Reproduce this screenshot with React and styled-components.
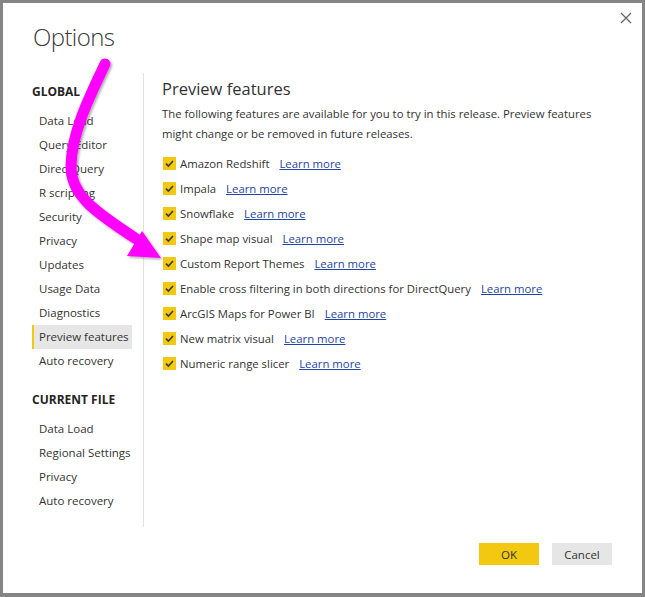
import styled, { createGlobalStyle } from "styled-components";

const GlobalStyle = createGlobalStyle`
  html, body { margin: 0; padding: 0; background: #fff; }
  body { font-family: "Open Sans", "Segoe UI", "Liberation Sans", sans-serif; color: #333; }
  * { box-sizing: border-box; }
`;

const globalItems = [
  "Data Load",
  "Query Editor",
  "DirectQuery",
  "R scripting",
  "Security",
  "Privacy",
  "Updates",
  "Usage Data",
  "Diagnostics",
  "Preview features",
  "Auto recovery",
];

const fileItems = ["Data Load", "Regional Settings", "Privacy", "Auto recovery"];

const features = [
  "Amazon Redshift",
  "Impala",
  "Snowflake",
  "Shape map visual",
  "Custom Report Themes",
  "Enable cross filtering in both directions for DirectQuery",
  "ArcGIS Maps for Power BI",
  "New matrix visual",
  "Numeric range slicer",
];

export default function App() {
  return (
    <>
      <GlobalStyle />
      <Frame>
        <Header>
          <Title>Options</Title>
          <CloseButton aria-label="Close">
            <svg width="12" height="12" viewBox="0 0 12 12">
              <path d="M1 1 L11 11 M11 1 L1 11" stroke="#666" strokeWidth="1.3" />
            </svg>
          </CloseButton>
        </Header>

        <Body>
          <Sidebar>
            <SectionTitle>GLOBAL</SectionTitle>
            {globalItems.map((item) => (
              <NavItem key={"g" + item} $active={item === "Preview features"}>
                {item}
              </NavItem>
            ))}
            <SectionTitle $spaced>CURRENT FILE</SectionTitle>
            {fileItems.map((item) => (
              <NavItem key={"f" + item}>{item}</NavItem>
            ))}
          </Sidebar>

          <Content>
            <Heading>Preview features</Heading>
            <Description>
              The following features are available for you to try in this release. Preview features
              might change or be removed in future releases.
            </Description>
            <FeatureList>
              {features.map((f) => (
                <FeatureRow key={f}>
                  <CheckBox>
                    <svg width="13" height="13" viewBox="0 0 13 13">
                      <path d="M3 6.6 L5.4 9 L10 4" fill="none" stroke="#3a3a3a" strokeWidth="1.6" />
                    </svg>
                  </CheckBox>
                  <FeatureLabel>{f}</FeatureLabel>
                  <LearnMore href="#">Learn more</LearnMore>
                </FeatureRow>
              ))}
            </FeatureList>
          </Content>
        </Body>

        <Footer>
          <Button $primary>OK</Button>
          <Button>Cancel</Button>
        </Footer>

        <ArrowOverlay width="645" height="597" viewBox="0 0 645 597">
          <defs>
            <filter id="shadow" x="-20%" y="-20%" width="140%" height="140%">
              <feDropShadow dx="1.5" dy="1.5" stdDeviation="1.2" floodColor="#000" floodOpacity="0.35" />
            </filter>
          </defs>
          <g filter="url(#shadow)">
            <path
              d="M105 64 C 92 92, 72 130, 71 165 C 70 195, 95 212, 138 240"
              fill="none"
              stroke="#ff00ff"
              strokeWidth="11"
              strokeLinecap="round"
            />
            <polygon points="142,231 161,258 127,256" fill="#ff00ff" />
          </g>
        </ArrowOverlay>
      </Frame>
    </>
  );
}

const Frame = styled.div`
  position: relative;
  width: 645px;
  height: 597px;
  border: 3px solid #858585;
  border-bottom-width: 4px;
  background: #fff;
  display: flex;
  flex-direction: column;
`;

const Header = styled.div`
  height: 70px;
  display: flex;
  justify-content: space-between;
  align-items: flex-start;
  padding: 19px 10px 0 30px;
  flex: none;
`;

const Title = styled.h1`
  margin: 0;
  font-family: "Open Sans", "Segoe UI", sans-serif;
  font-weight: 300;
  font-size: 24px;
  letter-spacing: -0.6px;
  line-height: 30px;
  color: #3b3a39;
`;

const CloseButton = styled.button`
  border: none;
  background: none;
  padding: 0;
  margin-top: -10px;
  width: 12px;
  height: 12px;
  display: flex;
`;

const Body = styled.div`
  display: flex;
  height: 454px;
  flex: none;
`;

const Sidebar = styled.nav`
  width: 141px;
  padding: 8px 0 0 29px;
  border-right: 1px solid #e1e1e1;
  display: flex;
  flex-direction: column;
  flex: none;
`;

const SectionTitle = styled.div`
  font-size: 12px;
  font-weight: 700;
  line-height: 22px;
  color: #252423;
  margin: ${(p) => (p.$spaced ? "16px 0 6px" : "0 0 6px")};
`;

const NavItem = styled.div`
  width: 100px;
  height: 24px;
  line-height: 24px;
  font-size: 11.5px;
  color: #333;
  padding-left: 5px;
  border-left: 2px solid ${(p) => (p.$active ? "#f2c811" : "transparent")};
  background: ${(p) => (p.$active ? "#e6e6e6" : "transparent")};
  white-space: nowrap;
`;

const Content = styled.section`
  flex: 1;
  padding: 4px 20px 0 18px;
`;

const Heading = styled.h2`
  margin: 0;
  font-size: 16.5px;
  font-weight: 400;
  line-height: 24px;
  color: #333;
`;

const Description = styled.p`
  margin: 3px 0 0;
  font-size: 11.35px;
  line-height: 20px;
  color: #333;
`;

const FeatureList = styled.div`
  margin-top: 7px;
  display: flex;
  flex-direction: column;
`;

const FeatureRow = styled.div`
  display: flex;
  align-items: center;
  height: 25px;
  padding-left: 1px;
`;

const CheckBox = styled.span`
  width: 13px;
  height: 13px;
  background: #f2c811;
  display: flex;
  flex: none;
  margin-right: 4px;
`;

const FeatureLabel = styled.span`
  font-size: 11.35px;
  color: #333;
  white-space: nowrap;
`;

const LearnMore = styled.a`
  margin-left: 10px;
  font-size: 11.35px;
  color: #1f44a3;
  text-decoration: underline;
  white-space: nowrap;
`;

const Footer = styled.div`
  display: flex;
  justify-content: flex-end;
  gap: 13px;
  padding: 16px 30px 0 0;
`;

const Button = styled.button`
  width: 60px;
  height: 22px;
  border: none;
  font-family: "Open Sans", "Segoe UI", sans-serif;
  font-size: 11.5px;
  color: #333;
  background: ${(p) => (p.$primary ? "#f2c811" : "#e6e6e6")};
  padding: 0;
`;

const ArrowOverlay = styled.svg`
  position: absolute;
  left: -3px;
  top: -3px;
  pointer-events: none;
`;
